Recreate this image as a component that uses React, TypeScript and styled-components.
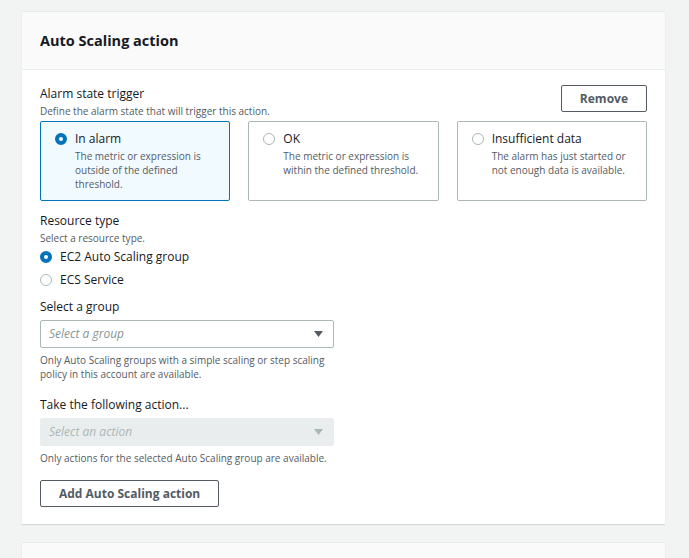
import React from "react";
import styled, { createGlobalStyle } from "styled-components";

const GlobalStyle = createGlobalStyle`
  html, body { margin: 0; padding: 0; }
  body {
    background: #f2f3f3;
    font-family: "Open Sans", "Liberation Sans", sans-serif;
    color: #16191f;
    -webkit-font-smoothing: antialiased;
  }
  * { box-sizing: border-box; }
`;

const Page = styled.div`
  display: flex;
  flex-direction: column;
  gap: 19px;
  padding: 12px 24px 0 22px;
  height: 558px;
  overflow: hidden;
`;

const Card = styled.section`
  background: #ffffff;
  box-shadow: 0 1px 1px 0 rgba(0, 28, 36, 0.12), 0 -1px 0 0 rgba(0, 28, 36, 0.04);
  flex: none;
`;

const CardHeader = styled.header`
  height: 58px;
  display: flex;
  align-items: center;
  padding: 0 18px;
  background: #fafafa;
  border-bottom: 1px solid #eaeded;
`;

const CardTitle = styled.h2`
  margin: 0;
  font-size: 14.5px;
  font-weight: 700;
  line-height: 20px;
  color: #16191f;
`;

const CardBody = styled.div`
  padding: 14px 18px 17px;
  display: flex;
  flex-direction: column;
`;

const TopRow = styled.div`
  display: flex;
  justify-content: space-between;
  align-items: flex-start;
`;

const FieldLabel = styled.div<{ $gap?: number }>`
  font-size: 12px;
  line-height: 20px;
  color: #16191f;
  margin-top: ${(p) => p.$gap ?? 0}px;
`;

const Hint = styled.div<{ $gap?: number }>`
  font-size: 10px;
  line-height: 14px;
  color: #545b64;
  margin-top: ${(p) => p.$gap ?? 0}px;
`;

const Button = styled.button<{ $gap?: number }>`
  align-self: flex-start;
  height: 27px;
  padding: 0 18px;
  margin-top: ${(p) => p.$gap ?? 0}px;
  background: #ffffff;
  border: 1px solid #545b64;
  border-radius: 2px;
  font-family: "Open Sans", "Liberation Sans", sans-serif;
  font-size: 12px;
  font-weight: 700;
  color: #545b64;
  cursor: pointer;
`;

const TileGrid = styled.div`
  display: grid;
  grid-template-columns: repeat(3, 1fr);
  gap: 18px;
  margin-top: 3px;
`;

const Tile = styled.label<{ $selected?: boolean }>`
  height: 80px;
  display: flex;
  align-items: flex-start;
  gap: 8px;
  padding: 7px 14px 0 14px;
  border: 1px solid ${(p) => (p.$selected ? "#0073bb" : "#aab7b8")};
  background: ${(p) => (p.$selected ? "#f1faff" : "#ffffff")};
  border-radius: 2px;
`;

const RadioWrap = styled.span`
  height: 20px;
  display: flex;
  align-items: center;
  flex: none;
`;

const Radio = styled.span<{ $checked?: boolean }>`
  display: block;
  width: 12px;
  height: 12px;
  border-radius: 50%;
  background: #ffffff;
  border: ${(p) => (p.$checked ? "4px solid #0073bb" : "1px solid #aab7b8")};
`;

const TileText = styled.span`
  display: flex;
  flex-direction: column;
`;

const TileTitle = styled.span`
  font-size: 12px;
  line-height: 20px;
  color: #16191f;
`;

const TileDesc = styled.span`
  font-size: 10px;
  line-height: 14px;
  color: #545b64;
`;

const RadioRow = styled.label`
  height: 23px;
  display: flex;
  align-items: center;
  gap: 8px;
  font-size: 12px;
  color: #16191f;
`;

const Select = styled.div<{ $disabled?: boolean }>`
  width: 294px;
  height: 28px;
  margin-top: 3px;
  display: flex;
  align-items: center;
  justify-content: space-between;
  padding: 0 10px 0 8px;
  border-radius: 2px;
  background: ${(p) => (p.$disabled ? "#eaeded" : "#ffffff")};
  border: 1px solid ${(p) => (p.$disabled ? "#eaeded" : "#aab7b8")};
  color: ${(p) => (p.$disabled ? "#aab7b8" : "#879596")};
`;

const Placeholder = styled.span`
  font-size: 12px;
  font-style: italic;
  line-height: 20px;
  color: inherit;
`;

const Caret = styled.svg<{ $disabled?: boolean }>`
  width: 9px;
  height: 6px;
  fill: ${(p) => (p.$disabled ? "#aab7b8" : "#545b64")};
`;

type TileData = { title: string; desc: string; selected?: boolean };

const tiles: TileData[] = [
  { title: "In alarm", desc: "The metric or expression is outside of the defined threshold.", selected: true },
  { title: "OK", desc: "The metric or expression is within the defined threshold." },
  { title: "Insufficient data", desc: "The alarm has just started or not enough data is available." },
];

const SelectBox: React.FC<{ placeholder: string; disabled?: boolean }> = ({ placeholder, disabled }) => (
  <Select $disabled={disabled}>
    <Placeholder>{placeholder}</Placeholder>
    <Caret $disabled={disabled} viewBox="0 0 9 6">
      <polygon points="0,0 9,0 4.5,6" />
    </Caret>
  </Select>
);

export default function App() {
  return (
    <>
      <GlobalStyle />
      <Page>
        <Card>
          <CardHeader>
            <CardTitle>Auto Scaling action</CardTitle>
          </CardHeader>
          <CardBody>
            <TopRow>
              <div>
                <FieldLabel>Alarm state trigger</FieldLabel>
                <Hint>Define the alarm state that will trigger this action.</Hint>
              </div>
              <Button $gap={1}>Remove</Button>
            </TopRow>
            <TileGrid>
              {tiles.map((t) => (
                <Tile key={t.title} $selected={t.selected}>
                  <RadioWrap>
                    <Radio $checked={t.selected} />
                  </RadioWrap>
                  <TileText>
                    <TileTitle>{t.title}</TileTitle>
                    <TileDesc>{t.desc}</TileDesc>
                  </TileText>
                </Tile>
              ))}
            </TileGrid>

            <FieldLabel $gap={10}>Resource type</FieldLabel>
            <Hint>Select a resource type.</Hint>
            <RadioRow>
              <Radio $checked />
              EC2 Auto Scaling group
            </RadioRow>
            <RadioRow>
              <Radio />
              ECS Service
            </RadioRow>

            <FieldLabel $gap={6}>Select a group</FieldLabel>
            <SelectBox placeholder="Select a group" />
            <Hint $gap={5}>
              Only Auto Scaling groups with a simple scaling or step scaling
              <br />
              policy in this account are available.
            </Hint>

            <FieldLabel $gap={14}>Take the following action...</FieldLabel>
            <SelectBox placeholder="Select an action" disabled />
            <Hint $gap={5}>Only actions for the selected Auto Scaling group are available.</Hint>

            <Button $gap={15}>Add Auto Scaling action</Button>
          </CardBody>
        </Card>
        <Card>
          <CardHeader />
        </Card>
      </Page>
    </>
  );
}
